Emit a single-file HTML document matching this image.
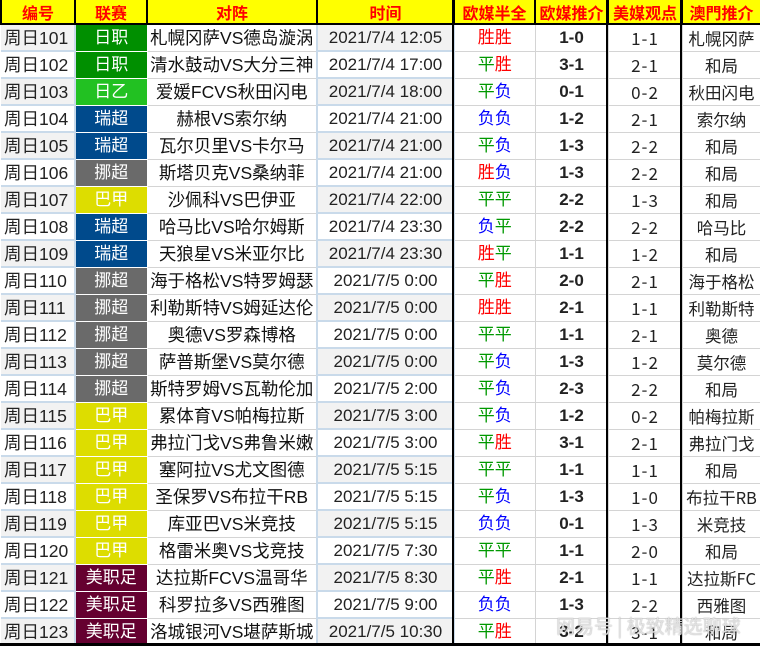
<!DOCTYPE html>
<html><head><meta charset="utf-8"><style>
*{margin:0;padding:0;box-sizing:border-box}
body{width:760px;height:646px;overflow:hidden;background:#fff;font-family:"Liberation Sans","Noto Sans CJK SC",sans-serif;position:relative}
table{border-collapse:collapse;table-layout:fixed;width:760px;position:absolute;left:0;top:0}
td,th{text-align:center;vertical-align:middle;font-size:17px;line-height:20px;white-space:nowrap;overflow:hidden;height:27px;border:1px solid #d4d4d4;color:#222;font-weight:normal;padding:0}
th{height:24px;background:#ffff00;color:#f00;font-family:"Noto Sans CJK SC",sans-serif;font-weight:bold;font-size:16px;border:2px solid #000;border-top:0}
td.n{background:#fff;border-color:#c9daea;border-width:2px 2px 2px 0;text-align:left;padding-left:3px;color:#222;font-size:17.5px}
tr.o td.n,tr.o td.t{background:#f2f2f2}
td.l{color:#fff;border-color:#fff}
td.t{border-color:#c9daea;border-width:2px;font-size:17px}
td.m{color:#111;font-size:17.5px}
td.s{font-weight:bold;font-size:17px}
td.p{font-family:"Noto Sans CJK SC",sans-serif;letter-spacing:1px}
td.a{font-family:"Noto Sans CJK SC",sans-serif;font-size:16.5px}
.r{color:#f00}.g{color:#090}.b{color:#00f}
.J1{background:#008f00}.J2{background:#22c122}.SW{background:#004a8c}.NO{background:#6a6a6a}.BR{background:#dddd00}.US{background:#650030}
.vl{position:absolute;top:0;width:2px;height:646px;background:#000}
.hb{position:absolute;left:0;top:643px;width:760px;height:3px;background:#000}
.wm{position:absolute;left:556px;top:614px;font-size:19px;line-height:24px;white-space:nowrap;color:rgba(255,255,255,0.7);text-shadow:0 0 1px #888;font-family:"Noto Sans CJK SC",sans-serif}
</style></head><body>
<table>
<colgroup><col style="width:74px"><col style="width:72px"><col style="width:170px"><col style="width:137px"><col style="width:81px"><col style="width:73px"><col style="width:74px"><col style="width:79px"></colgroup>
<tr><th>编号</th><th>联赛</th><th>对阵</th><th>时间</th><th>欧媒半全</th><th>欧媒推介</th><th>美媒观点</th><th>澳門推介</th></tr>
<tr class="o"><td class="n">周日101</td><td class="l J1">日职</td><td class="m">札幌冈萨VS德岛漩涡</td><td class="t">2021/7/4 12:05</td><td><span class="r">胜胜</span></td><td class="s">1-0</td><td class="p">1-1</td><td class="a">札幌冈萨</td></tr>
<tr><td class="n">周日102</td><td class="l J1">日职</td><td class="m">清水鼓动VS大分三神</td><td class="t">2021/7/4 17:00</td><td><span class="g">平</span><span class="r">胜</span></td><td class="s">3-1</td><td class="p">2-1</td><td class="a">和局</td></tr>
<tr class="o"><td class="n">周日103</td><td class="l J2">日乙</td><td class="m">爱媛FCVS秋田闪电</td><td class="t">2021/7/4 18:00</td><td><span class="g">平</span><span class="b">负</span></td><td class="s">0-1</td><td class="p">0-2</td><td class="a">秋田闪电</td></tr>
<tr><td class="n">周日104</td><td class="l SW">瑞超</td><td class="m">赫根VS索尔纳</td><td class="t">2021/7/4 21:00</td><td><span class="b">负负</span></td><td class="s">1-2</td><td class="p">2-1</td><td class="a">索尔纳</td></tr>
<tr class="o"><td class="n">周日105</td><td class="l SW">瑞超</td><td class="m">瓦尔贝里VS卡尔马</td><td class="t">2021/7/4 21:00</td><td><span class="g">平</span><span class="b">负</span></td><td class="s">1-3</td><td class="p">2-2</td><td class="a">和局</td></tr>
<tr><td class="n">周日106</td><td class="l NO">挪超</td><td class="m">斯塔贝克VS桑纳菲</td><td class="t">2021/7/4 21:00</td><td><span class="r">胜</span><span class="b">负</span></td><td class="s">1-3</td><td class="p">2-2</td><td class="a">和局</td></tr>
<tr class="o"><td class="n">周日107</td><td class="l BR">巴甲</td><td class="m">沙佩科VS巴伊亚</td><td class="t">2021/7/4 22:00</td><td><span class="g">平平</span></td><td class="s">2-2</td><td class="p">1-3</td><td class="a">和局</td></tr>
<tr><td class="n">周日108</td><td class="l SW">瑞超</td><td class="m">哈马比VS哈尔姆斯</td><td class="t">2021/7/4 23:30</td><td><span class="b">负</span><span class="g">平</span></td><td class="s">2-2</td><td class="p">2-2</td><td class="a">哈马比</td></tr>
<tr class="o"><td class="n">周日109</td><td class="l SW">瑞超</td><td class="m">天狼星VS米亚尔比</td><td class="t">2021/7/4 23:30</td><td><span class="r">胜</span><span class="g">平</span></td><td class="s">1-1</td><td class="p">1-2</td><td class="a">和局</td></tr>
<tr><td class="n">周日110</td><td class="l NO">挪超</td><td class="m">海于格松VS特罗姆瑟</td><td class="t">2021/7/5 0:00</td><td><span class="g">平</span><span class="r">胜</span></td><td class="s">2-0</td><td class="p">2-1</td><td class="a">海于格松</td></tr>
<tr class="o"><td class="n">周日111</td><td class="l NO">挪超</td><td class="m">利勒斯特VS姆延达伦</td><td class="t">2021/7/5 0:00</td><td><span class="r">胜胜</span></td><td class="s">2-1</td><td class="p">1-1</td><td class="a">利勒斯特</td></tr>
<tr><td class="n">周日112</td><td class="l NO">挪超</td><td class="m">奥德VS罗森博格</td><td class="t">2021/7/5 0:00</td><td><span class="g">平平</span></td><td class="s">1-1</td><td class="p">2-1</td><td class="a">奥德</td></tr>
<tr class="o"><td class="n">周日113</td><td class="l NO">挪超</td><td class="m">萨普斯堡VS莫尔德</td><td class="t">2021/7/5 0:00</td><td><span class="g">平</span><span class="b">负</span></td><td class="s">1-3</td><td class="p">1-2</td><td class="a">莫尔德</td></tr>
<tr><td class="n">周日114</td><td class="l NO">挪超</td><td class="m">斯特罗姆VS瓦勒伦加</td><td class="t">2021/7/5 2:00</td><td><span class="g">平</span><span class="b">负</span></td><td class="s">2-3</td><td class="p">2-2</td><td class="a">和局</td></tr>
<tr class="o"><td class="n">周日115</td><td class="l BR">巴甲</td><td class="m">累体育VS帕梅拉斯</td><td class="t">2021/7/5 3:00</td><td><span class="g">平</span><span class="b">负</span></td><td class="s">1-2</td><td class="p">0-2</td><td class="a">帕梅拉斯</td></tr>
<tr><td class="n">周日116</td><td class="l BR">巴甲</td><td class="m">弗拉门戈VS弗鲁米嫩</td><td class="t">2021/7/5 3:00</td><td><span class="g">平</span><span class="r">胜</span></td><td class="s">3-1</td><td class="p">2-1</td><td class="a">弗拉门戈</td></tr>
<tr class="o"><td class="n">周日117</td><td class="l BR">巴甲</td><td class="m">塞阿拉VS尤文图德</td><td class="t">2021/7/5 5:15</td><td><span class="g">平平</span></td><td class="s">1-1</td><td class="p">1-1</td><td class="a">和局</td></tr>
<tr><td class="n">周日118</td><td class="l BR">巴甲</td><td class="m">圣保罗VS布拉干RB</td><td class="t">2021/7/5 5:15</td><td><span class="g">平</span><span class="b">负</span></td><td class="s">1-3</td><td class="p">1-0</td><td class="a">布拉干RB</td></tr>
<tr class="o"><td class="n">周日119</td><td class="l BR">巴甲</td><td class="m">库亚巴VS米竞技</td><td class="t">2021/7/5 5:15</td><td><span class="b">负负</span></td><td class="s">0-1</td><td class="p">1-3</td><td class="a">米竞技</td></tr>
<tr><td class="n">周日120</td><td class="l BR">巴甲</td><td class="m">格雷米奥VS戈竞技</td><td class="t">2021/7/5 7:30</td><td><span class="g">平平</span></td><td class="s">1-1</td><td class="p">2-0</td><td class="a">和局</td></tr>
<tr class="o"><td class="n">周日121</td><td class="l US">美职足</td><td class="m">达拉斯FCVS温哥华</td><td class="t">2021/7/5 8:30</td><td><span class="g">平</span><span class="r">胜</span></td><td class="s">2-1</td><td class="p">1-1</td><td class="a">达拉斯FC</td></tr>
<tr><td class="n">周日122</td><td class="l US">美职足</td><td class="m">科罗拉多VS西雅图</td><td class="t">2021/7/5 9:00</td><td><span class="b">负负</span></td><td class="s">1-3</td><td class="p">2-2</td><td class="a">西雅图</td></tr>
<tr class="o"><td class="n">周日123</td><td class="l US">美职足</td><td class="m">洛城银河VS堪萨斯城</td><td class="t">2021/7/5 10:30</td><td><span class="g">平</span><span class="r">胜</span></td><td class="s">3-2</td><td class="p">3-1</td><td class="a">和局</td></tr>
</table>
<div class="vl" style="left:452px"></div>
<div class="vl" style="left:606px"></div>
<div class="vl" style="left:680px"></div>
<div class="hb"></div>
<div class="wm">网易号 | 极致精选聊球</div>
</body></html>
